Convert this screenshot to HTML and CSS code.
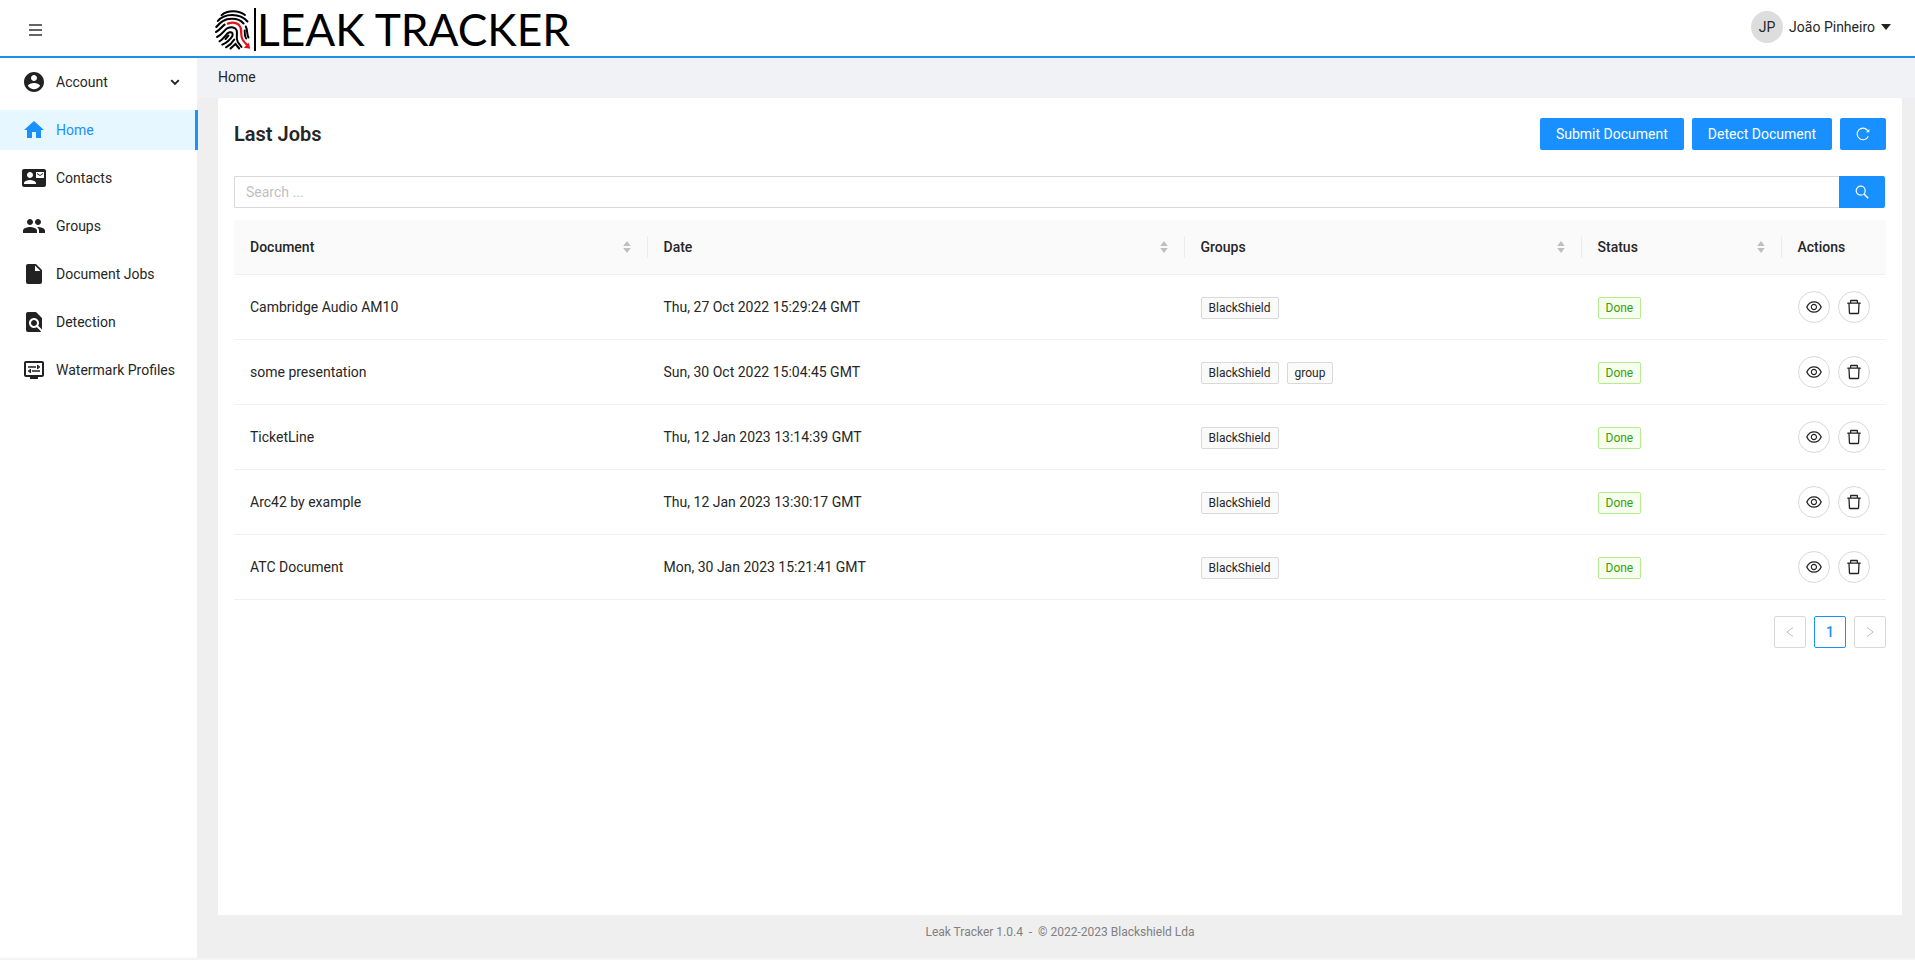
FILE: index.html
```html
<!DOCTYPE html>
<html lang="en">
<head>
<meta charset="utf-8">
<title>Leak Tracker</title>
<link rel="stylesheet" href="styles.css">
</head>
<body>
<svg class="defs" width="0" height="0">
  <defs>
    <symbol id="eye" viewBox="64 64 896 896"><path d="M942.200 486.200C847.400 286.500 704.100 186 512 186c-192.200 0-335.400 100.500-430.200 300.300a60.300 60.300 0 0 0 0 51.500C176.600 737.500 319.900 838 512 838c192.200 0 335.400-100.500 430.200-300.300 7.700-16.200 7.700-35 0-51.500zM512 766c-161.300 0-279.400-81.800-362.700-254C232.600 339.800 350.700 258 512 258c161.300 0 279.400 81.800 362.700 254C791.500 684.200 673.400 766 512 766zm-4-430c-97.200 0-176 78.800-176 176s78.800 176 176 176 176-78.800 176-176-78.800-176-176-176zm0 288c-61.900 0-112-50.100-112-112s50.100-112 112-112 112 50.100 112 112-50.100 112-112 112z"/></symbol>
    <symbol id="trash" viewBox="64 64 896 896"><path d="M360 184h-8c4.400 0 8-3.600 8-8v8h304v-8c0 4.400 3.600 8 8 8h-8v72h72v-80c0-35.300-28.700-64-64-64H352c-35.300 0-64 28.700-64 64v80h72v-72zm504 72H160c-17.700 0-32 14.300-32 32v32c0 4.400 3.600 8 8 8h60.400l24.700 523c1.600 34.100 29.800 61 63.900 61h454c34.200 0 62.300-26.800 63.900-61l24.700-523H888c4.400 0 8-3.600 8-8v-32c0-17.700-14.300-32-32-32zM731.300 840H292.700l-24.200-512h487l-24.200 512z"/></symbol>
    <symbol id="sort" viewBox="0 0 8 12"><path d="M4 0 7.800 5H.2zM4 12 7.800 7H.2z"/></symbol>
  </defs>
</svg>
<header class="header">
  <div class="menu-toggle"><svg width="13" height="12" viewBox="0 0 13 12"><path d="M0 1h13M0 6h13M0 11h13" stroke="#333" stroke-width="1.400"/></svg></div>
  <div class="logo">
    <svg class="finger" width="36" height="40" viewBox="0 0 36 40" fill="none" stroke="#000" stroke-width="2" stroke-linecap="round">
      <path d="M6.500 5.200C12.500 0 23.500 0 30 5"/>
      <path d="M2.800 11C9 3 25 2.500 32.500 11.500"/>
      <path d="M1.300 17C5.500 12 9 8.800 17 8.800c5 0 9 1.600 11.500 4.700"/>
      <path d="M30.800 16.500c2.200 4.500.7 7.500 2.700 11"/>
      <path d="M1 22c4-2 6-5.500 8.600-7.400"/>
      <path stroke="#e0141c" stroke-width="2.200" d="M12.800 13.600c6-2.200 11-.4 12.700 3.700 1.700 5-.5 8.500 2.300 12.700 1.500 2.300 3.400 4 5.200 5.800"/>
      <path fill="#e0141c" stroke="none" d="m35.300 38.800-6.500-1 5-5z"/>
      <path d="M29.700 20.500c0 3-.3 5.500 1.500 8"/>
      <path d="M2 27c5-2 7.500-7.500 10.500-8.800 4-1.800 8-1 9.200 2.300 1 4.500-1.200 7.500 1.100 11.500l3.700 5"/>
      <path d="M4.500 31.300c5-2.800 6.500-8 10-9 3-.6 3.800 1.500 2.700 4C15 30 11 33 7.300 34.700"/>
      <path d="M11 37.300c3.500-1.800 6.500-4.800 8.300-7.800"/>
      <path d="m15.500 38.500 5-4.500 3.700 4.500"/>
      <path d="M13.500 25.500 10.500 29"/>
    </svg>
    <span class="logo-bar"></span>
    <span class="logo-text">LEAK TRACKER</span>
  </div>
  <div class="user"><span class="avatar">JP</span><span>João Pinheiro</span><i class="caret"></i></div>
</header>
<div class="shell">
  <nav class="sidebar">
    <a class="item"><svg viewBox="0 0 24 24"><path d="M12 2C6.480 2 2 6.480 2 12s4.480 10 10 10 10-4.480 10-10S17.520 2 12 2zm0 3c1.660 0 3 1.340 3 3s-1.340 3-3 3-3-1.340-3-3 1.340-3 3-3zm0 14.200c-2.500 0-4.710-1.280-6-3.220.03-1.990 4-3.080 6-3.080 1.990 0 5.970 1.090 6 3.080-1.290 1.940-3.500 3.220-6 3.220z"/></svg><span>Account</span><svg class="chev" viewBox="0 0 10 7"><path d="M1.200 1.200 5 5l3.800-3.800" fill="none" stroke="#222" stroke-width="1.900"/></svg></a>
    <a class="item active"><svg viewBox="0 0 24 24"><path d="M10 20v-6h4v6h5v-8h3L12 3 2 12h3v8z"/></svg><span>Home</span></a>
    <a class="item"><svg viewBox="0 0 24 24"><path d="M21 8V7l-3 2-3-2v1l3 2 3-2zm1-5H2C.9 3 0 3.900 0 5v14c0 1.100.9 2 2 2h20c1.100 0 1.990-.9 1.990-2L24 5c0-1.100-.9-2-2-2zM8 6c1.660 0 3 1.340 3 3s-1.340 3-3 3-3-1.340-3-3 1.340-3 3-3zm6 12H2v-1c0-2 4-3.100 6-3.100s6 1.100 6 3.100v1zm8-6h-8V6h8v6z"/></svg><span>Contacts</span></a>
    <a class="item"><svg viewBox="0 0 24 24"><path d="M16 11c1.660 0 2.990-1.340 2.990-3S17.660 5 16 5c-1.660 0-3 1.340-3 3s1.340 3 3 3zm-8 0c1.660 0 2.990-1.340 2.990-3S9.660 5 8 5C6.340 5 5 6.340 5 8s1.340 3 3 3zm0 2c-2.330 0-7 1.170-7 3.500V19h14v-2.500c0-2.330-4.670-3.500-7-3.500zm8 0c-.29 0-.62.020-.97.050 1.160.84 1.970 1.970 1.970 3.450V19h6v-2.500c0-2.330-4.670-3.500-7-3.500z"/></svg><span>Groups</span></a>
    <a class="item"><svg viewBox="0 0 24 24"><path d="M6 2c-1.100 0-1.990.9-1.990 2L4 20c0 1.100.89 2 1.990 2H18c1.100 0 2-.9 2-2V8l-6-6H6zm7 7V3.500L18.500 9H13z"/></svg><span>Document Jobs</span></a>
    <a class="item"><svg viewBox="0 0 24 24"><path d="M20 19.590V8l-6-6H6c-1.100 0-1.990.9-1.990 2L4 20c0 1.100.89 2 1.990 2H18c.45 0 .85-.15 1.190-.4l-4.430-4.430c-.8.52-1.740.83-2.760.83-2.760 0-5-2.240-5-5s2.240-5 5-5 5 2.240 5 5c0 1.020-.31 1.960-.83 2.750L20 19.590zM9 13c0 1.660 1.340 3 3 3s3-1.340 3-3-1.340-3-3-3-3 1.340-3 3z"/></svg><span>Detection</span></a>
    <a class="item"><svg viewBox="0 0 24 24"><path d="M20 3H4c-1.110 0-2 .89-2 2v12c0 1.100.89 2 2 2h4v2h8v-2h4c1.100 0 2-.9 2-2V5c0-1.110-.9-2-2-2zm0 14H4V5h16v12zM6 8.250h8v1.500H6zm10.500 1.500H18v-1.500h-1.500V7H15v4h1.500zM10 12.250h8v1.500h-8zM7.500 15H9v-4H7.500v1.250H6v1.500h1.500z"/></svg><span>Watermark Profiles</span></a>
  </nav>
  <main class="main">
    <div class="crumb">Home</div>
    <section class="panel">
      <div class="titlebar">
        <h1>Last Jobs</h1>
        <button class="btn">Submit Document</button>
        <button class="btn">Detect Document</button>
        <button class="btn icon-btn"><svg width="14" height="14" viewBox="0 0 14 14"><path d="M12.300 9.200A5.800 5.800 0 1 1 11.700 3.600" fill="none" stroke="#fff" stroke-width="1.100"/><path d="M13.300 1.900v3.300H10z" fill="#fff"/></svg></button>
      </div>
      <div class="search">
        <div class="field">Search ...</div>
        <button class="btn icon-btn"><svg width="14" height="14" viewBox="0 0 14 14" fill="none" stroke="#fff" stroke-width="1.200"><circle cx="5.700" cy="5.700" r="4.500"/><path d="m8.900 8.900 4.300 4.300" stroke-width="1.500"/></svg></button>
      </div>
      <div class="table">
        <div class="row head">
          <div>Document<svg class="sort"><use href="#sort"/></svg></div>
          <div>Date<svg class="sort"><use href="#sort"/></svg></div>
          <div>Groups<svg class="sort"><use href="#sort"/></svg></div>
          <div>Status<svg class="sort"><use href="#sort"/></svg></div>
          <div>Actions</div>
        </div>
        <div class="row"><div>Cambridge Audio AM10</div><div>Thu, 27 Oct 2022 15:29:24 GMT</div><div><span class="tag">BlackShield</span></div><div><span class="tag done">Done</span></div><div><span class="round"><svg><use href="#eye"/></svg></span><span class="round"><svg><use href="#trash"/></svg></span></div></div>
        <div class="row"><div>some presentation</div><div>Sun, 30 Oct 2022 15:04:45 GMT</div><div><span class="tag">BlackShield</span><span class="tag">group</span></div><div><span class="tag done">Done</span></div><div><span class="round"><svg><use href="#eye"/></svg></span><span class="round"><svg><use href="#trash"/></svg></span></div></div>
        <div class="row"><div>TicketLine</div><div>Thu, 12 Jan 2023 13:14:39 GMT</div><div><span class="tag">BlackShield</span></div><div><span class="tag done">Done</span></div><div><span class="round"><svg><use href="#eye"/></svg></span><span class="round"><svg><use href="#trash"/></svg></span></div></div>
        <div class="row"><div>Arc42 by example</div><div>Thu, 12 Jan 2023 13:30:17 GMT</div><div><span class="tag">BlackShield</span></div><div><span class="tag done">Done</span></div><div><span class="round"><svg><use href="#eye"/></svg></span><span class="round"><svg><use href="#trash"/></svg></span></div></div>
        <div class="row"><div>ATC Document</div><div>Mon, 30 Jan 2023 15:21:41 GMT</div><div><span class="tag">BlackShield</span></div><div><span class="tag done">Done</span></div><div><span class="round"><svg><use href="#eye"/></svg></span><span class="round"><svg><use href="#trash"/></svg></span></div></div>
      </div>
      <div class="pager">
        <span class="page"><svg width="8" height="12" viewBox="0 0 8 12"><path d="M7 1.500.8 6 7 10.500"/></svg></span>
        <span class="page current">1</span>
        <span class="page"><svg width="8" height="12" viewBox="0 0 8 12"><path d="M1 1.500 7.200 6 1 10.500"/></svg></span>
      </div>
    </section>
    <footer class="footer">Leak Tracker 1.0.4 &nbsp;-&nbsp; © 2022-2023 Blackshield Lda</footer>
  </main>
</div>
</body>
</html>
```
FILE: styles.css
```css
* { box-sizing: border-box; }
body {
  margin: 0;
  height: 960px;
  overflow: hidden;
  display: flex;
  flex-direction: column;
  font: 14px/22px Roboto, "Liberation Sans", sans-serif;
  color: #262626;
  background: #fff;
}
.defs { position: absolute; }
.header {
  height: 58px;
  flex: none;
  display: flex;
  align-items: flex-start;
  border-bottom: 2px solid #1f8fe5;
  background: #fff;
}
.menu-toggle { width: 215px; padding: 24px 0 0 28.500px; }
.menu-toggle svg { display: block; }
.logo { display: flex; align-items: flex-start; }
.finger { margin-top: 10px; }
.logo-bar { width: 2px; height: 43px; margin: 8px 0 0 3px; background: #000; }
.logo-text {
  margin: 2px 0 0 1px;
  font: 44.300px/54px Lato, sans-serif;
  color: #000;
  white-space: nowrap;
}
.user {
  margin: 11px 24px 0 auto;
  height: 32px;
  display: flex;
  align-items: center;
}
.avatar {
  width: 32px;
  height: 32px;
  margin-right: 6px;
  border-radius: 50%;
  background: #ddd;
  text-align: center;
  line-height: 32px;
}
.caret {
  margin-left: 6px;
  border: 5px solid transparent;
  border-top: 6px solid #222;
  border-bottom: 0;
}
.shell { flex: 1; display: flex; min-height: 0; }
.sidebar {
  width: 197px;
  flex: none;
  padding: 4px 0 0;
  display: flex;
  flex-direction: column;
  gap: 8px;
  background: linear-gradient(#fff, #f2f2f2) bottom / 100% 4px no-repeat;
}
.item {
  height: 40px;
  display: flex;
  align-items: center;
  padding-left: 22px;
  white-space: nowrap;
}
.item > svg { width: 24px; height: 24px; margin-right: 10px; fill: #222; flex: none; }
.item > .chev { width: 10px; height: 7px; margin: 0 17px 0 auto; }
.active {
  position: relative;
  margin-right: -1px;
  border-right: 3px solid #1f8fff;
  background: #e6f7ff;
  color: #1890ff;
}
.item.active > svg { fill: #1890ff; }
.main {
  flex: 1;
  min-width: 0;
  display: flex;
  flex-direction: column;
  padding: 0 13px 0 21px;
  background: linear-gradient(#f0f2f5 40px, #efefef 40px);
  border-bottom: 2px solid #f5f5f5;
}
.crumb { height: 40px; line-height: 38px; }
.panel { height: 817px; padding: 20px 16px; background: #fff; }
.titlebar { display: flex; gap: 8px; height: 32px; }
h1 { margin: 0 auto 0 0; font-size: 20px; line-height: 32px; font-weight: 600; }
.btn {
  height: 32px;
  padding: 0 16px;
  border: 0;
  border-radius: 2px;
  background: #1890ff;
  color: #fff;
  font: inherit;
}
.icon-btn { width: 46px; display: flex; align-items: center; justify-content: center; }
.search { display: flex; margin: 26px 1px 12px 0; }
.search .btn { border-radius: 0 2px 2px 0; }
.field {
  flex: 1;
  height: 32px;
  border: 1px solid #d9d9d9;
  border-right: 0;
  border-radius: 2px 0 0 2px;
  padding: 0 11px;
  line-height: 30px;
  color: #bfbfbf;
}
.row {
  display: grid;
  grid-template-columns: 413.500px 537px 397px 200px 104.500px;
  height: 65px;
  border-bottom: 1px solid #f0f0f0;
}
.row > div { display: flex; align-items: center; padding: 0 16px; gap: 8px; }
.head { height: 55px; background: #fafafa; font-weight: 500; border-radius: 2px 2px 0 0; }
.head > div { justify-content: space-between; position: relative; }
.head > div:not(:last-child)::after {
  content: "";
  position: absolute;
  right: 0;
  top: 16px;
  width: 1px;
  height: 22px;
  background: #ececec;
}
.sort { width: 8px; height: 12px; margin-right: 1px; fill: #bfbfbf; }
.tag {
  height: 22px;
  margin-top: 1px;
  padding: 0 7px;
  border: 1px solid #d9d9d9;
  border-radius: 2px;
  background: #fafafa;
  font-size: 12px;
  line-height: 20px;
}
.done { border-color: #b7eb8f; background: #f6ffed; color: #389e0d; }
.round {
  width: 32px;
  height: 32px;
  flex: none;
  border: 1px solid #d9d9d9;
  border-radius: 50%;
  display: flex;
  align-items: center;
  justify-content: center;
}
.round svg { width: 16px; height: 16px; fill: #222; }
.pager { display: flex; justify-content: flex-end; gap: 8px; margin-top: 16px; }
.page {
  width: 32px;
  height: 32px;
  border: 1px solid #d9d9d9;
  border-radius: 2px;
  display: flex;
  align-items: center;
  justify-content: center;
}
.page path { fill: none; stroke: #bfbfbf; stroke-width: 1; }
.current { border-color: #1890ff; color: #1890ff; font-weight: 500; }
.footer { padding-top: 6px; text-align: center; font-size: 12px; color: #808080; }
```
